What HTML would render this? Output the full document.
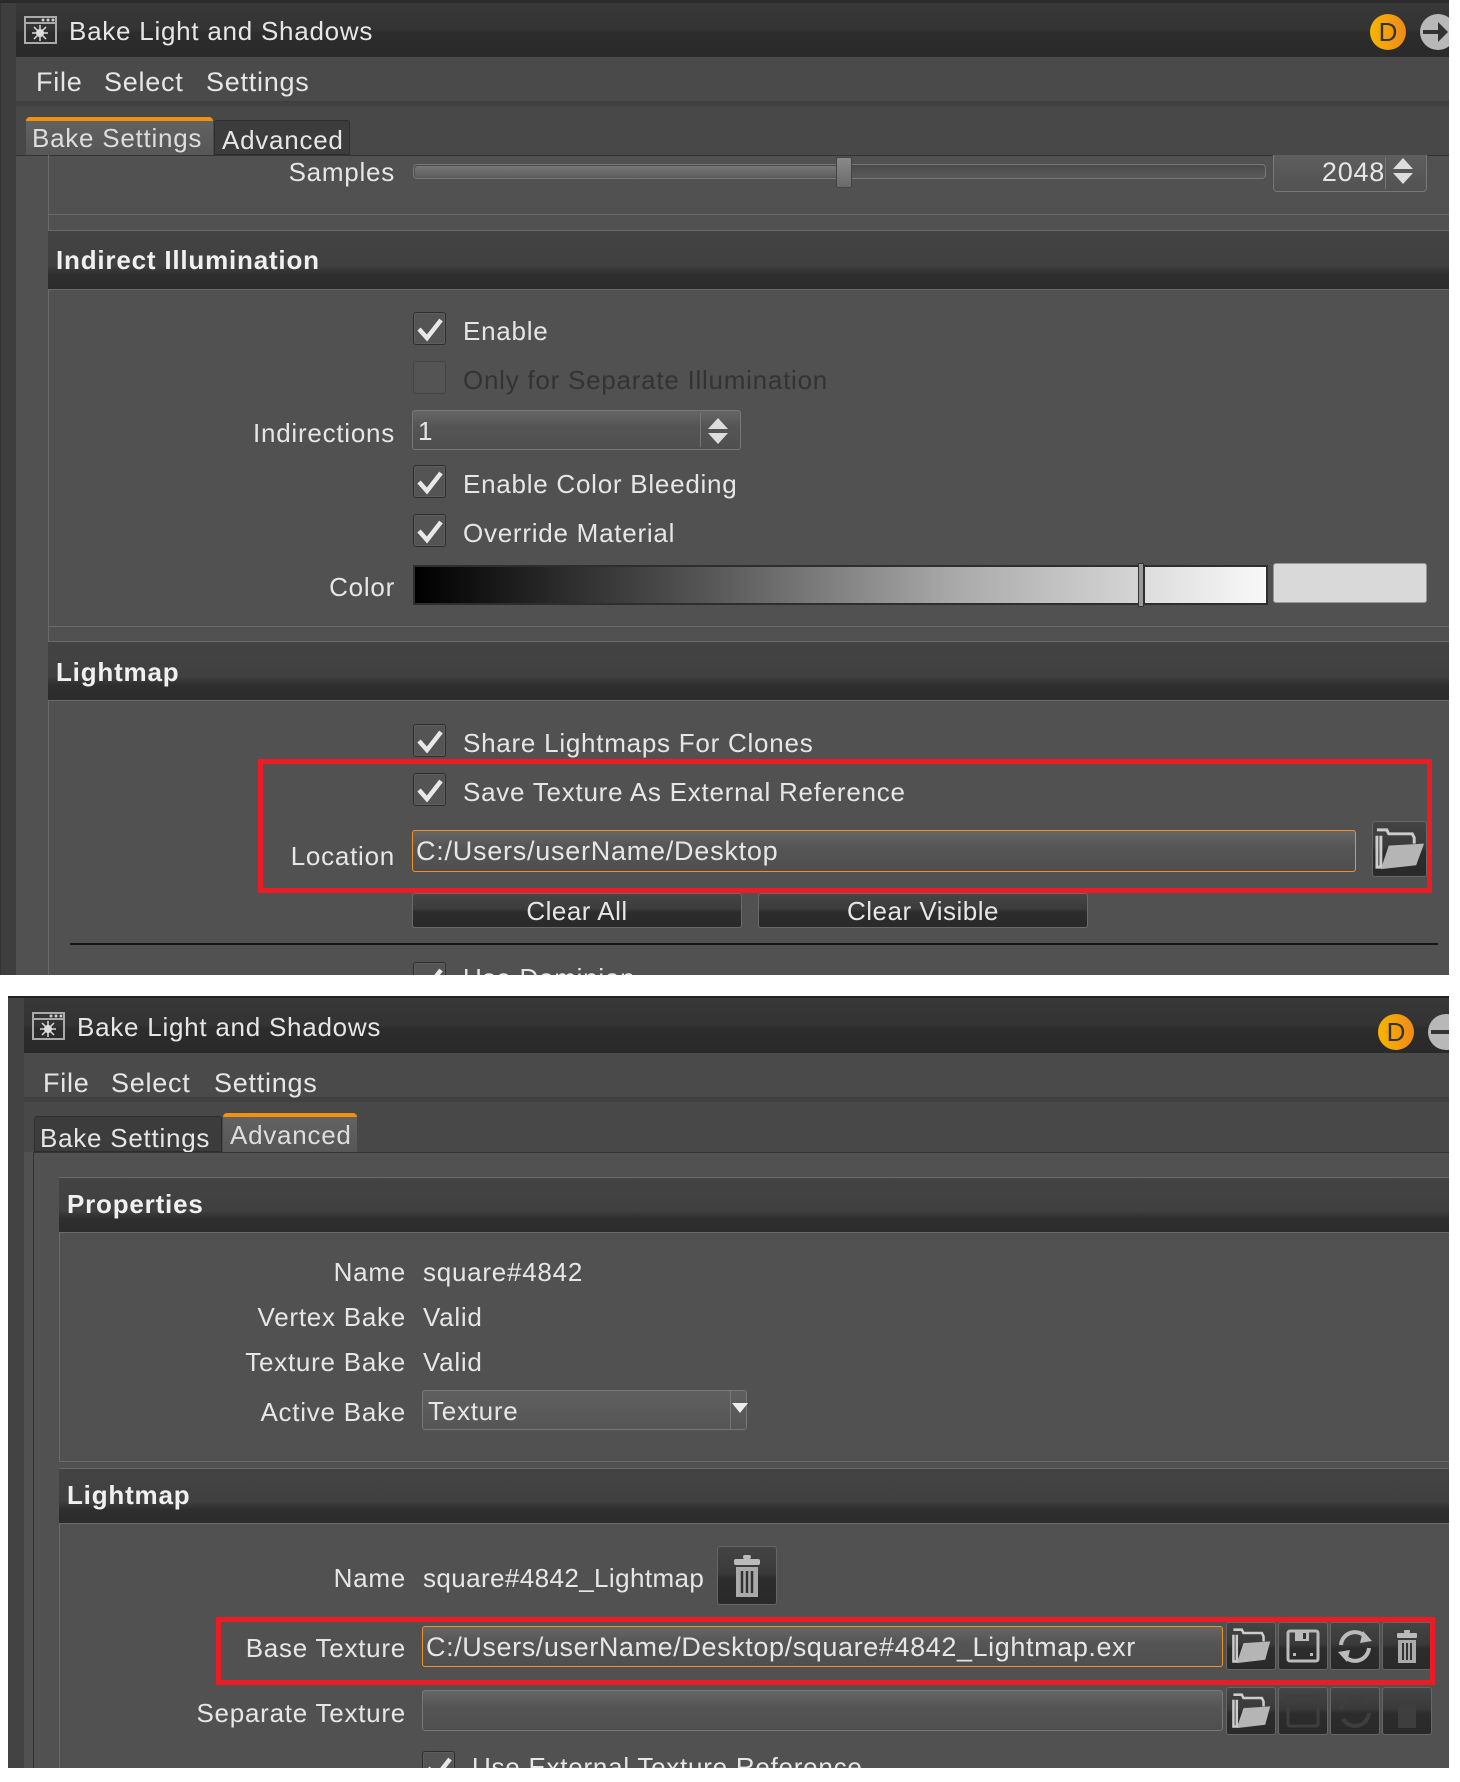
<!DOCTYPE html>
<html><head><meta charset="utf-8">
<style>
*{margin:0;padding:0;box-sizing:border-box}
body{width:1460px;height:1782px;background:#fff;position:relative;overflow:hidden;font-family:"Liberation Sans","Noto Sans CJK JP",sans-serif;color:#e6e6e6}
.a{position:absolute}
.t{position:absolute;font-size:26px;line-height:30px;white-space:nowrap;letter-spacing:0.75px}
.r{text-align:right}
.title{background:linear-gradient(#383838,#333 50%,#2c2c2c 55%,#2a2a2a)}
.menu{background:#4a4a4a}
.hdr{background:linear-gradient(#434343,#404040 60%,#2e2e2e 75%,#2c2c2c);border-top:1px solid #6a6a6a;border-bottom:1px solid #6a6a6a}
.hdr span{position:absolute;left:8px;font-weight:bold;font-size:26px;color:#f0f0f0;letter-spacing:0.8px}
.cb{position:absolute;width:33px;height:33px;border:1px solid #2e2e2e;border-radius:3px;background:#545454;box-shadow:inset 0 0 0 1px #5e5e5e}
.cb svg{position:absolute;left:2px;top:2px}
.inp{position:absolute;background:linear-gradient(#666,#555 40%,#4f4f4f);border:1px solid #777;border-radius:3px}
.btn{position:absolute;background:linear-gradient(#454545,#3c3c3c 45%,#2c2c2c 55%,#2a2a2a);border:1px solid #6a6a6a;border-radius:3px;text-align:center;font-size:26px;line-height:34px;letter-spacing:0.5px}
.ib{position:absolute;background:linear-gradient(#444,#3a3a3a 45%,#2c2c2c 55%,#2a2a2a);border:1px solid #666;border-radius:3px}
.red{position:absolute;border:5px solid #ec1c24}
</style></head><body>

<!-- ============ TOP PANEL ============ -->
<div class="a" style="left:0;top:0;width:1449px;height:975px;background:#515151"></div>
<div class="a" style="left:0;top:0;width:1449px;height:3px;background:#2a2a2a"></div>
<div class="a" style="left:0;top:3px;width:16px;height:972px;background:#3e3e3e;border-left:1px solid #333"></div>
<div class="a title" style="left:16px;top:3px;width:1433px;height:54px"></div>
<svg class="a" style="left:24px;top:16px" width="33" height="28" viewBox="0 0 33 28"><rect x="1" y="1" width="31" height="26" fill="none" stroke="#aaa" stroke-width="2"/><line x1="1" y1="7" x2="32" y2="7" stroke="#aaa" stroke-width="2"/><circle cx="19" cy="4" r="1.5" fill="#ccc"/><circle cx="24" cy="4" r="1.5" fill="#ccc"/><circle cx="29" cy="4" r="1.5" fill="#ccc"/><circle cx="16" cy="17" r="4" fill="#ddd"/><g stroke="#ddd" stroke-width="1.5"><line x1="16" y1="9" x2="16" y2="25"/><line x1="8" y1="17" x2="24" y2="17"/><line x1="10" y1="11" x2="22" y2="23"/><line x1="22" y1="11" x2="10" y2="23"/></g></svg>
<div class="t" style="left:69px;top:16px">Bake Light and Shadows</div>
<svg class="a" style="left:1368px;top:12px" width="40" height="40"><defs><linearGradient id="og" x1="0" x2="1"><stop offset="0" stop-color="#f7b500"/><stop offset="1" stop-color="#ef8a1c"/></linearGradient></defs><circle cx="20" cy="20" r="18" fill="url(#og)"/><text x="20" y="29" text-anchor="middle" font-family="Liberation Sans" font-size="26" fill="#333">D</text></svg>
<svg class="a" style="left:1418px;top:12px" width="31" height="40"><circle cx="20" cy="20" r="18" fill="#b8b8b8"/><rect x="5" y="18" width="22" height="4" fill="#333"/><path d="M20 10 L30 20 L20 30Z" fill="#333"/></svg>
<div class="a menu" style="left:16px;top:57px;width:1433px;height:45px;border-bottom:1px solid #3e3e3e"></div>
<div class="t" style="left:36px;top:67px;font-size:27px">File</div>
<div class="t" style="left:104px;top:67px;font-size:27px">Select</div>
<div class="t" style="left:206px;top:67px;font-size:27px">Settings</div>
<div class="a" style="left:16px;top:102px;width:1433px;height:53px;background:#484848;border-top:4px solid #404040"></div>
<div class="a" style="left:26px;top:117px;width:187px;height:38px;background:linear-gradient(#626262,#565656);border-top:4px solid #f2900f;border-radius:4px 4px 0 0"></div>
<div class="t" style="left:32px;top:123px;color:#ddd">Bake Settings</div>
<div class="a" style="left:214px;top:120px;width:136px;height:35px;background:#3c3c3c;border:1px solid #2e2e2e;border-radius:3px 3px 0 0"></div>
<div class="t" style="left:222px;top:125px">Advanced</div>
<div class="a" style="left:16px;top:155px;width:1433px;height:1px;background:#333"></div>
<div class="a" style="left:48px;top:155px;width:1px;height:820px;background:#6a6a6a"></div>
<!-- samples -->
<div class="a" style="left:48px;top:214px;width:1401px;height:1px;background:#6a6a6a"></div>
<div class="t r" style="left:-5px;width:400px;top:157px">Samples</div>
<div class="a" style="left:413px;top:164px;width:853px;height:15px;border:1px solid #777;border-radius:4px;background:linear-gradient(#4a4a4a,#5a5a5a)"></div>
<div class="a" style="left:415px;top:166px;width:423px;height:11px;background:linear-gradient(#777,#5f5f5f);border-radius:3px"></div>
<div class="a" style="left:836px;top:157px;width:16px;height:31px;background:linear-gradient(#8a8a8a,#6a6a6a);border:1px solid #444;border-radius:2px"></div>
<div class="a" style="left:1273px;top:155px;width:154px;height:37px;border:1px solid #777;border-top:none;border-radius:0 0 4px 4px;background:linear-gradient(#5e5e5e,#525252)"></div>
<div class="t r" style="left:1273px;width:112px;top:157px;font-size:27px">2048</div>
<div class="a" style="left:1385px;top:157px;width:1px;height:32px;background:#777"></div>
<svg class="a" style="left:1392px;top:156px" width="22" height="30"><path d="M1 13 L11 2 L21 13Z M1 17 L11 28 L21 17Z" fill="#ddd"/></svg>

<!-- Indirect Illumination -->
<div class="a" style="left:48px;top:230px;width:1401px;height:397px;border:1px solid #6a6a6a;border-right:none"></div>
<div class="a hdr" style="left:48px;top:230px;width:1401px;height:60px"><span style="top:14px">Indirect Illumination</span></div>
<div class="cb" style="left:413px;top:312px"><svg width="28" height="28"><path d="M3 14 L11 23 L25 5" fill="none" stroke="#e8e8e8" stroke-width="4.5"/></svg></div>
<div class="t" style="left:463px;top:316px">Enable</div>
<div class="cb" style="left:413px;top:361px;box-shadow:none;border-color:#444"></div>
<div class="t" style="left:463px;top:365px;color:#333">Only for Separate Illumination</div>
<div class="t r" style="left:-5px;width:400px;top:418px">Indirections</div>
<div class="inp" style="left:412px;top:410px;width:329px;height:40px"></div>
<div class="t" style="left:418px;top:416px">1</div>
<div class="a" style="left:700px;top:413px;width:1px;height:34px;background:#777"></div>
<svg class="a" style="left:707px;top:416px" width="22" height="30"><path d="M1 13 L11 2 L21 13Z M1 17 L11 28 L21 17Z" fill="#ddd"/></svg>
<div class="cb" style="left:413px;top:465px"><svg width="28" height="28"><path d="M3 14 L11 23 L25 5" fill="none" stroke="#e8e8e8" stroke-width="4.5"/></svg></div>
<div class="t" style="left:463px;top:469px">Enable Color Bleeding</div>
<div class="cb" style="left:413px;top:514px"><svg width="28" height="28"><path d="M3 14 L11 23 L25 5" fill="none" stroke="#e8e8e8" stroke-width="4.5"/></svg></div>
<div class="t" style="left:463px;top:518px">Override Material</div>
<div class="t r" style="left:-5px;width:400px;top:572px">Color</div>
<div class="a" style="left:413px;top:565px;width:727px;height:40px;border:2px solid #2e2e2e;background:linear-gradient(90deg,#000,#555 40%,#aaa 75%,#d5d5d5)"></div>
<div class="a" style="left:1138px;top:563px;width:6px;height:44px;background:#999;border:1px solid #333"></div>
<div class="a" style="left:1143px;top:565px;width:125px;height:40px;border:2px solid #2e2e2e;background:linear-gradient(90deg,#ddd,#f8f8f8)"></div>
<div class="a" style="left:1273px;top:563px;width:154px;height:40px;background:#d9d9d9;border:1px solid #999;border-radius:3px"></div>

<!-- Lightmap top -->
<div class="a" style="left:48px;top:641px;width:1401px;height:334px;border-left:1px solid #6a6a6a"></div>
<div class="a hdr" style="left:48px;top:641px;width:1401px;height:60px"><span style="top:15px">Lightmap</span></div>
<div class="cb" style="left:413px;top:724px"><svg width="28" height="28"><path d="M3 14 L11 23 L25 5" fill="none" stroke="#e8e8e8" stroke-width="4.5"/></svg></div>
<div class="t" style="left:463px;top:728px">Share Lightmaps For Clones</div>
<div class="cb" style="left:413px;top:773px"><svg width="28" height="28"><path d="M3 14 L11 23 L25 5" fill="none" stroke="#e8e8e8" stroke-width="4.5"/></svg></div>
<div class="t" style="left:463px;top:777px">Save Texture As External Reference</div>
<div class="t r" style="left:-5px;width:400px;top:841px">Location</div>
<div class="inp" style="left:412px;top:830px;width:944px;height:42px;border-color:#f0922a"></div>
<div class="t" style="left:416px;top:836px;font-size:27px">C:/Users/userName/Desktop</div>
<div class="ib" style="left:1372px;top:821px;width:55px;height:56px"><svg width="53" height="54" viewBox="0 0 54 55"><path d="M4 14 L4 46 L8 46 L8 14 M4 8 L14 8 L16 12 L40 12 L42 16 L42 22" fill="none" stroke="#ccc" stroke-width="3"/><path d="M8 48 L16 24 L52 22 L44 44Z" fill="#b5b5b5"/></svg></div>
<div class="red" style="left:258px;top:759px;width:1174px;height:134px"></div>
<div class="btn" style="left:412px;top:893px;width:330px;height:35px">Clear All</div>
<div class="btn" style="left:758px;top:893px;width:330px;height:35px">Clear Visible</div>
<div class="a" style="left:70px;top:943px;width:1368px;height:2px;background:#151515"></div>
<div class="cb" style="left:413px;top:962px;height:20px"><svg width="28" height="28"><path d="M3 14 L11 23 L25 5" fill="none" stroke="#e8e8e8" stroke-width="4.5"/></svg></div>
<div class="t" style="left:463px;top:963px;height:12px;overflow:hidden;line-height:30px">Use Dominion</div>
<div class="a" style="left:0;top:975px;width:1460px;height:21px;background:#fff"></div>

<!-- ============ BOTTOM PANEL ============ -->
<div class="a" style="left:8px;top:996px;width:1441px;height:772px;background:#515151;border-top:2px solid #222"></div>
<div class="a" style="left:8px;top:998px;width:16px;height:770px;background:#434343"></div>
<div class="a title" style="left:24px;top:998px;width:1425px;height:55px"></div>
<svg class="a" style="left:32px;top:1012px" width="33" height="28" viewBox="0 0 33 28"><rect x="1" y="1" width="31" height="26" fill="none" stroke="#aaa" stroke-width="2"/><line x1="1" y1="7" x2="32" y2="7" stroke="#aaa" stroke-width="2"/><circle cx="19" cy="4" r="1.5" fill="#ccc"/><circle cx="24" cy="4" r="1.5" fill="#ccc"/><circle cx="29" cy="4" r="1.5" fill="#ccc"/><circle cx="16" cy="17" r="4" fill="#ddd"/><g stroke="#ddd" stroke-width="1.5"><line x1="16" y1="9" x2="16" y2="25"/><line x1="8" y1="17" x2="24" y2="17"/><line x1="10" y1="11" x2="22" y2="23"/><line x1="22" y1="11" x2="10" y2="23"/></g></svg>
<div class="t" style="left:77px;top:1012px">Bake Light and Shadows</div>
<svg class="a" style="left:1376px;top:1012px" width="40" height="40"><circle cx="20" cy="20" r="18" fill="url(#og)"/><text x="20" y="29" text-anchor="middle" font-family="Liberation Sans" font-size="26" fill="#333">D</text></svg>
<svg class="a" style="left:1426px;top:1012px" width="23" height="40"><circle cx="20" cy="20" r="18" fill="#b8b8b8"/><rect x="5" y="18" width="22" height="4" fill="#333"/></svg>
<div class="a menu" style="left:24px;top:1053px;width:1425px;height:45px;border-bottom:1px solid #3e3e3e"></div>
<div class="t" style="left:43px;top:1068px;font-size:27px">File</div>
<div class="t" style="left:111px;top:1068px;font-size:27px">Select</div>
<div class="t" style="left:214px;top:1068px;font-size:27px">Settings</div>
<div class="a" style="left:24px;top:1098px;width:1425px;height:54px;background:#484848;border-top:4px solid #404040"></div>
<div class="a" style="left:34px;top:1116px;width:188px;height:36px;background:#3c3c3c;border:1px solid #2e2e2e;border-radius:3px 3px 0 0"></div>
<div class="t" style="left:40px;top:1123px">Bake Settings</div>
<div class="a" style="left:223px;top:1113px;width:134px;height:39px;background:linear-gradient(#626262,#565656);border-top:4px solid #f2900f;border-radius:4px 4px 0 0"></div>
<div class="t" style="left:230px;top:1120px;color:#ddd">Advanced</div>
<div class="a" style="left:33px;top:1152px;width:1416px;height:1px;background:#333"></div>
<div class="a" style="left:33px;top:1152px;width:1px;height:616px;background:#333"></div>

<!-- Properties -->
<div class="a" style="left:59px;top:1177px;width:1390px;height:285px;border:1px solid #6a6a6a;border-right:none"></div>
<div class="a hdr" style="left:59px;top:1177px;width:1390px;height:56px"><span style="top:11px">Properties</span></div>
<div class="t r" style="left:6px;width:400px;top:1257px">Name</div>
<div class="t" style="left:423px;top:1257px">square#4842</div>
<div class="t r" style="left:6px;width:400px;top:1302px">Vertex Bake</div>
<div class="t" style="left:423px;top:1302px">Valid</div>
<div class="t r" style="left:6px;width:400px;top:1347px">Texture Bake</div>
<div class="t" style="left:423px;top:1347px">Valid</div>
<div class="t r" style="left:6px;width:400px;top:1397px">Active Bake</div>
<div class="inp" style="left:422px;top:1390px;width:325px;height:40px;background:linear-gradient(#606060,#555)"></div>
<div class="t" style="left:428px;top:1396px">Texture</div>
<div class="a" style="left:730px;top:1391px;width:1px;height:38px;background:#777"></div>
<svg class="a" style="left:732px;top:1403px" width="16" height="12"><path d="M0 0 L16 0 L8 10Z" fill="#eee"/></svg>

<!-- Lightmap bottom -->
<div class="a" style="left:59px;top:1468px;width:1390px;height:300px;border-left:1px solid #6a6a6a"></div>
<div class="a hdr" style="left:59px;top:1468px;width:1390px;height:56px"><span style="top:11px">Lightmap</span></div>
<div class="t r" style="left:6px;width:400px;top:1563px">Name</div>
<div class="t" style="left:423px;top:1563px;letter-spacing:0.4px">square#4842_Lightmap</div>
<div class="ib" style="left:717px;top:1546px;width:60px;height:59px"><svg width="58" height="57" viewBox="0 0 58 57"><rect x="25" y="8" width="8" height="4" rx="2" fill="#bbb"/><rect x="16" y="12" width="26" height="6" rx="2" fill="#bbb"/><path d="M18 20 L40 20 L40 50 L18 50Z" fill="#aaa"/><g stroke="#333" stroke-width="2.5"><line x1="24" y1="24" x2="24" y2="46"/><line x1="29" y1="24" x2="29" y2="46"/><line x1="34" y1="24" x2="34" y2="46"/></g></svg></div>

<div class="t r" style="left:6px;width:400px;top:1633px">Base Texture</div>
<div class="inp" style="left:422px;top:1626px;width:801px;height:41px;border-color:#f0922a"></div>
<div class="t" style="left:426px;top:1632px;font-size:27px;letter-spacing:0.6px">C:/Users/userName/Desktop/square#4842_Lightmap.exr</div>

<div class="ib" style="left:1226px;top:1622px;width:50px;height:48px"><svg width="48" height="46" viewBox="0 0 54 55"><path d="M6 14 L6 46 L10 46 L10 14 M6 8 L16 8 L18 12 L40 12 L42 16 L42 22" fill="none" stroke="#ccc" stroke-width="3"/><path d="M10 48 L18 24 L50 22 L44 44Z" fill="#b5b5b5"/></svg></div>
<div class="ib" style="left:1278px;top:1622px;width:50px;height:48px"><svg width="48" height="46"><rect x="9" y="8" width="30" height="30" rx="2" fill="none" stroke="#bbb" stroke-width="3"/><rect x="16" y="9" width="14" height="9" fill="#bbb"/><rect x="24" y="10" width="3" height="6" fill="#333"/><rect x="14" y="30" width="3" height="3" fill="#bbb"/><rect x="31" y="30" width="3" height="3" fill="#bbb"/></svg></div>
<div class="ib" style="left:1330px;top:1622px;width:50px;height:48px"><svg width="48" height="46"><path d="M10 22 A14 14 0 0 1 36 16" fill="none" stroke="#bbb" stroke-width="4"/><path d="M32 8 L41 18 L29 20Z" fill="#bbb"/><path d="M38 25 A14 14 0 0 1 12 31" fill="none" stroke="#bbb" stroke-width="4"/><path d="M16 39 L7 29 L19 27Z" fill="#bbb"/></svg></div>
<div class="ib" style="left:1382px;top:1622px;width:50px;height:48px"><svg width="48" height="46"><rect x="21" y="7" width="6" height="3" rx="1" fill="#bbb"/><rect x="14" y="10" width="20" height="5" rx="1" fill="#bbb"/><path d="M15 17 L33 17 L33 40 L15 40Z" fill="#aaa"/><g stroke="#333" stroke-width="2"><line x1="20" y1="20" x2="20" y2="37"/><line x1="24" y1="20" x2="24" y2="37"/><line x1="28" y1="20" x2="28" y2="37"/></g></svg></div>
<div class="red" style="left:216px;top:1617px;width:1219px;height:68px"></div>

<div class="t r" style="left:6px;width:400px;top:1698px">Separate Texture</div>
<div class="inp" style="left:422px;top:1690px;width:801px;height:41px"></div>
<div class="ib" style="left:1226px;top:1687px;width:50px;height:48px"><svg width="48" height="46" viewBox="0 0 54 55"><path d="M6 14 L6 46 L10 46 L10 14 M6 8 L16 8 L18 12 L40 12 L42 16 L42 22" fill="none" stroke="#ccc" stroke-width="3"/><path d="M10 48 L18 24 L50 22 L44 44Z" fill="#b5b5b5"/></svg></div>
<div class="ib" style="left:1278px;top:1687px;width:50px;height:48px"><svg width="48" height="46"><rect x="9" y="8" width="30" height="30" rx="2" fill="none" stroke="#3e3e3e" stroke-width="3"/></svg></div>
<div class="ib" style="left:1330px;top:1687px;width:50px;height:48px"><svg width="48" height="46"><path d="M10 22 A14 14 0 0 1 36 16" fill="none" stroke="#3e3e3e" stroke-width="4"/><path d="M38 25 A14 14 0 0 1 12 31" fill="none" stroke="#3e3e3e" stroke-width="4"/></svg></div>
<div class="ib" style="left:1382px;top:1687px;width:50px;height:48px"><svg width="48" height="46"><path d="M15 17 L33 17 L33 40 L15 40Z" fill="#3e3e3e"/></svg></div>
<div class="cb" style="left:422px;top:1751px;height:20px"><svg width="28" height="28"><path d="M3 14 L11 23 L25 5" fill="none" stroke="#e8e8e8" stroke-width="4.5"/></svg></div>
<div class="t" style="left:472px;top:1752px;height:16px;overflow:hidden">Use External Texture Reference</div>
<div class="a" style="left:0;top:1768px;width:1460px;height:14px;background:#fff"></div>
<div class="a" style="left:1449px;top:0;width:11px;height:1782px;background:#fff"></div>
</body></html>
